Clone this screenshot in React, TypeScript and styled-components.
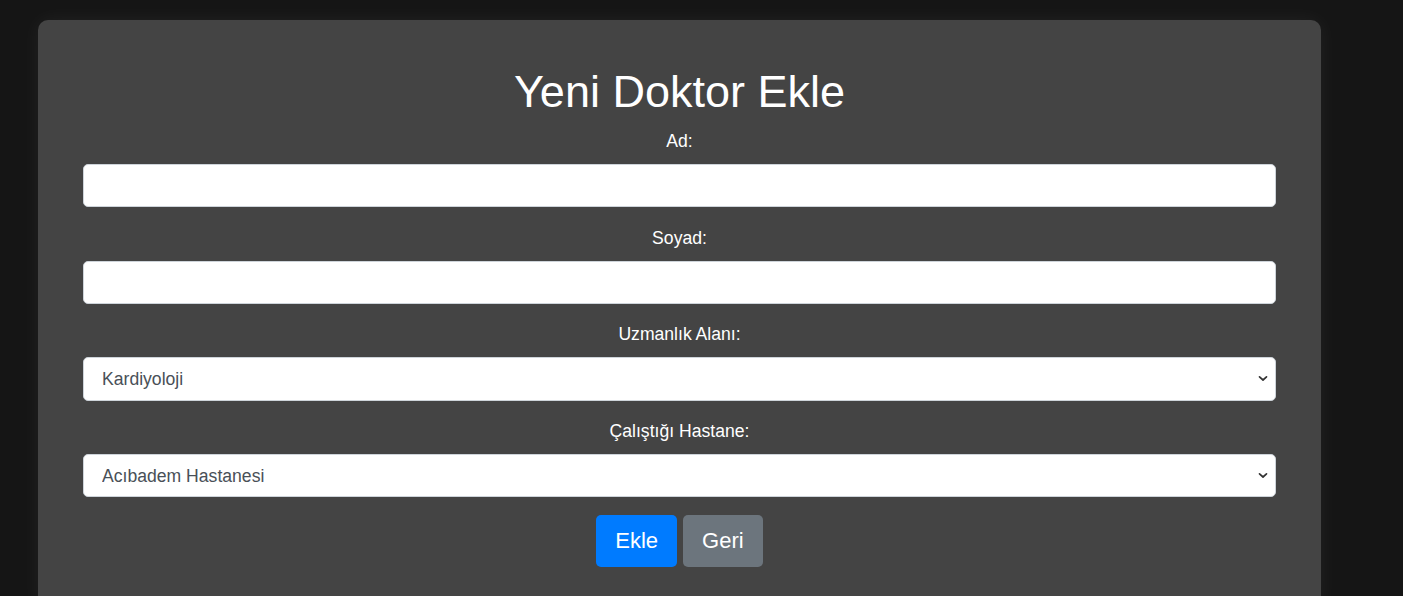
import React from "react";
import styled, { createGlobalStyle } from "styled-components";

const GlobalStyle = createGlobalStyle`
  html, body {
    margin: 0;
    padding: 0;
    background: #151515;
    font-family: "Liberation Sans", Arial, sans-serif;
    overflow: hidden;
  }
`;

const Page = styled.div`
  padding: 20px 0 0 38px;
  min-height: 596px;
  box-sizing: border-box;
`;

const Card = styled.div`
  width: 1283px;
  box-sizing: border-box;
  background: #444444;
  border-radius: 10px;
  padding: 20px 45px 40px;
  box-shadow: 0 0 20px rgba(255, 255, 255, 0.06);
  color: #ffffff;
  text-align: center;
`;

const Title = styled.h1`
  font-size: 45px;
  font-weight: 400;
  line-height: 52px;
  margin: 26px 0 10px;
`;

const Group = styled.div`
  display: flex;
  flex-direction: column;
  margin-bottom: 17.5px;
`;

const Label = styled.label`
  font-size: 17.6px;
  line-height: 26px;
  margin-bottom: 10px;
`;

const fieldBase = `
  width: 100%;
  height: 43.2px;
  box-sizing: border-box;
  border: 1px solid #ced4da;
  border-radius: 5px;
  background: #ffffff;
  font-family: "Liberation Sans", Arial, sans-serif;
  font-size: 17.6px;
  color: #495057;
`;

const Input = styled.input`
  ${fieldBase}
  padding: 0 18px;
`;

const SelectWrap = styled.div`
  position: relative;
  display: flex;
`;

const Select = styled.select`
  ${fieldBase}
  appearance: none;
  -webkit-appearance: none;
  padding: 0 30px 0 18px;
  outline: none;
`;

const Chevron = styled.svg`
  position: absolute;
  right: 8px;
  top: 50%;
  width: 10px;
  height: 7px;
  margin-top: -4px;
  pointer-events: none;
`;

const Actions = styled.div`
  display: flex;
  justify-content: center;
  gap: 6px;
`;

const Button = styled.button<{ $variant: "primary" | "secondary" }>`
  height: 52.5px;
  padding: 0 19px;
  border: none;
  border-radius: 5px;
  font-family: "Liberation Sans", Arial, sans-serif;
  font-size: 22px;
  color: #ffffff;
  background: ${(p) => (p.$variant === "primary" ? "#007bff" : "#6c757d")};
  cursor: pointer;
`;

const SelectField: React.FC<{ id: string; value: string; options: string[] }> = ({
  id,
  value,
  options,
}) => (
  <SelectWrap>
    <Select id={id} defaultValue={value}>
      {options.map((o) => (
        <option key={o}>{o}</option>
      ))}
    </Select>
    <Chevron viewBox="0 0 10 7" aria-hidden="true">
      <path d="M1.5 1.8 L5 5 L8.5 1.8" fill="none" stroke="#333" strokeWidth="1.7" strokeLinecap="round" strokeLinejoin="round" />
    </Chevron>
  </SelectWrap>
);

export default function App() {
  return (
    <>
      <GlobalStyle />
      <Page>
        <Card>
          <Title>Yeni Doktor Ekle</Title>
          <Group>
            <Label htmlFor="ad">Ad:</Label>
            <Input id="ad" type="text" />
          </Group>
          <Group>
            <Label htmlFor="soyad">Soyad:</Label>
            <Input id="soyad" type="text" />
          </Group>
          <Group>
            <Label htmlFor="uzmanlik">Uzmanlık Alanı:</Label>
            <SelectField
              id="uzmanlik"
              value="Kardiyoloji"
              options={["Kardiyoloji", "Nöroloji", "Ortopedi"]}
            />
          </Group>
          <Group>
            <Label htmlFor="hastane">Çalıştığı Hastane:</Label>
            <SelectField
              id="hastane"
              value="Acıbadem Hastanesi"
              options={["Acıbadem Hastanesi", "Memorial Hastanesi"]}
            />
          </Group>
          <Actions>
            <Button $variant="primary">Ekle</Button>
            <Button $variant="secondary">Geri</Button>
          </Actions>
        </Card>
      </Page>
    </>
  );
}
